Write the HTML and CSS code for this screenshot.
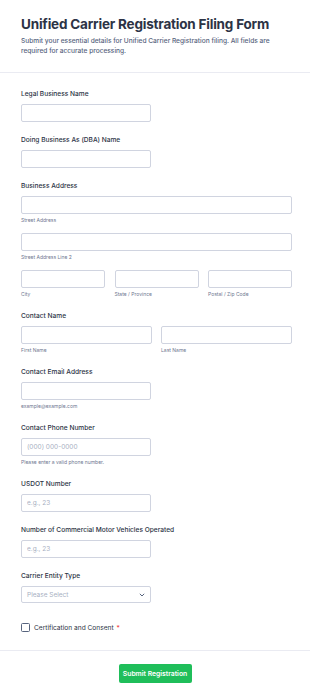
FILE: index.html
```html
<!DOCTYPE html>
<html lang="en">
<head>
<meta charset="utf-8">
<title>Unified Carrier Registration Filing Form</title>
<link rel="stylesheet" href="styles.css">
</head>
<body>
<form class="form">
  <header class="header">
    <h1 class="title">Unified Carrier Registration Filing Form</h1>
    <p class="subtitle">Submit your essential details for Unified Carrier Registration filing. All fields are required for accurate processing.</p>
  </header>

  <div class="body">
    <div class="field">
      <label class="label">Legal Business Name</label>
      <input class="input half" type="text">
    </div>

    <div class="field">
      <label class="label">Doing Business As (DBA) Name</label>
      <input class="input half" type="text">
    </div>

    <div class="field">
      <label class="label">Business Address</label>
      <div class="sub">
        <input class="input" type="text">
        <span class="sublabel">Street Address</span>
      </div>
      <div class="sub">
        <input class="input" type="text">
        <span class="sublabel">Street Address Line 2</span>
      </div>
      <div class="row three">
        <div class="sub">
          <input class="input" type="text">
          <span class="sublabel">City</span>
        </div>
        <div class="sub">
          <input class="input" type="text">
          <span class="sublabel">State / Province</span>
        </div>
        <div class="sub">
          <input class="input" type="text">
          <span class="sublabel">Postal / Zip Code</span>
        </div>
      </div>
    </div>

    <div class="field">
      <label class="label">Contact Name</label>
      <div class="row two">
        <div class="sub">
          <input class="input" type="text">
          <span class="sublabel">First Name</span>
        </div>
        <div class="sub">
          <input class="input" type="text">
          <span class="sublabel">Last Name</span>
        </div>
      </div>
    </div>

    <div class="field">
      <label class="label">Contact Email Address</label>
      <div class="sub">
        <input class="input half" type="email">
        <span class="sublabel">example@example.com</span>
      </div>
    </div>

    <div class="field">
      <label class="label">Contact Phone Number</label>
      <div class="sub">
        <input class="input half" type="tel" placeholder="(000) 000-0000">
        <span class="sublabel">Please enter a valid phone number.</span>
      </div>
    </div>

    <div class="field">
      <label class="label">USDOT Number</label>
      <input class="input half" type="text" placeholder="e.g., 23">
    </div>

    <div class="field">
      <label class="label">Number of Commercial Motor Vehicles Operated</label>
      <input class="input half" type="text" placeholder="e.g., 23">
    </div>

    <div class="field">
      <label class="label">Carrier Entity Type</label>
      <div class="select half">
        <span class="select-text">Please Select</span>
        <svg class="chevron" width="6" height="4" viewBox="0 0 6 4"><path d="M0.8 0.8 L3 3 L5.2 0.8" fill="none" stroke="#57647e" stroke-width="1"/></svg>
      </div>
    </div>

    <div class="check-field">
      <span class="checkbox"></span>
      <span class="check-label">Certification and Consent <span class="req">*</span></span>
    </div>
  </div>

  <footer class="footer">
    <button class="submit" type="button">Submit Registration</button>
  </footer>
</form>
</body>
</html>
```

FILE: styles.css
```css
* { box-sizing: border-box; }
html, body { margin: 0; padding: 0; background: #ffffff; }
body { font-family: Inter, "Noto Sans", sans-serif; color: #2c3345; }

.form { width: 310px; }

.header {
  padding: 15px 18px 0 21px;
  height: 73px;
  border-bottom: 1px solid #eaebf2;
}
.title {
  margin: 0;
  font-size: 13.5px;
  line-height: 18px;
  font-weight: 700;
  color: #2c3345;
  letter-spacing: -0.2px;
  white-space: nowrap;
}
.subtitle {
  margin: 3px 0 0;
  font-size: 6.6px;
  line-height: 10px;
  font-weight: 500;
  color: #57647e;
}

.body {
  padding: 16px 18px 18px 21px;
  display: flex;
  flex-direction: column;
}
.field {
  display: flex;
  flex-direction: column;
  margin-bottom: 13px;
}
.label {
  font-size: 6.6px;
  line-height: 10px;
  font-weight: 500;
  color: #2c3345;
  margin-bottom: 5px;
}
.input {
  display: block;
  width: 100%;
  height: 18px;
  border: 1px solid #d0d4e0;
  border-radius: 2px;
  background: #fff;
  font-family: Inter, sans-serif;
  font-size: 6.5px;
  padding: 0 5px;
  color: #2c3345;
  margin: 0;
}
.input::placeholder { color: #a8afc2; }
.half { width: 130px; }

.sub {
  display: flex;
  flex-direction: column;
  margin-bottom: 9px;
}
.row .sub { margin-bottom: 0; }
.field > .sub:last-child { margin-bottom: 0; }
.sublabel {
  font-size: 5px;
  line-height: 7px;
  margin-top: 3px;
  color: #6f7891;
}
.row { display: grid; }
.row.three { grid-template-columns: 84px 84px 84px; column-gap: 9.5px; }
.row.two { grid-template-columns: 131px 131px; column-gap: 9px; }

.select {
  height: 17px;
  border: 1px solid #d0d4e0;
  border-radius: 2px;
  display: flex;
  align-items: center;
  justify-content: space-between;
  padding: 0 5px;
}
.select-text { font-size: 6.5px; color: #a8afc2; }

.check-field {
  display: flex;
  align-items: center;
  margin-top: 7px;
}
.checkbox {
  width: 9px;
  height: 9px;
  border: 1px solid #57647e;
  border-radius: 1.5px;
  margin-right: 4px;
}
.check-label { font-size: 6.6px; color: #2c3345; }
.req { color: #f23a3c; margin-left: 1px; }

.footer {
  border-top: 1px solid #eaebf2;
  display: flex;
  justify-content: center;
  padding-top: 13px;
}
.submit {
  width: 73px;
  height: 19px;
  border: none;
  border-radius: 2px;
  background: #1fbe5a;
  color: #fff;
  font-family: Inter, sans-serif;
  font-size: 6.8px;
  font-weight: 600;
  padding: 0;
}
```
